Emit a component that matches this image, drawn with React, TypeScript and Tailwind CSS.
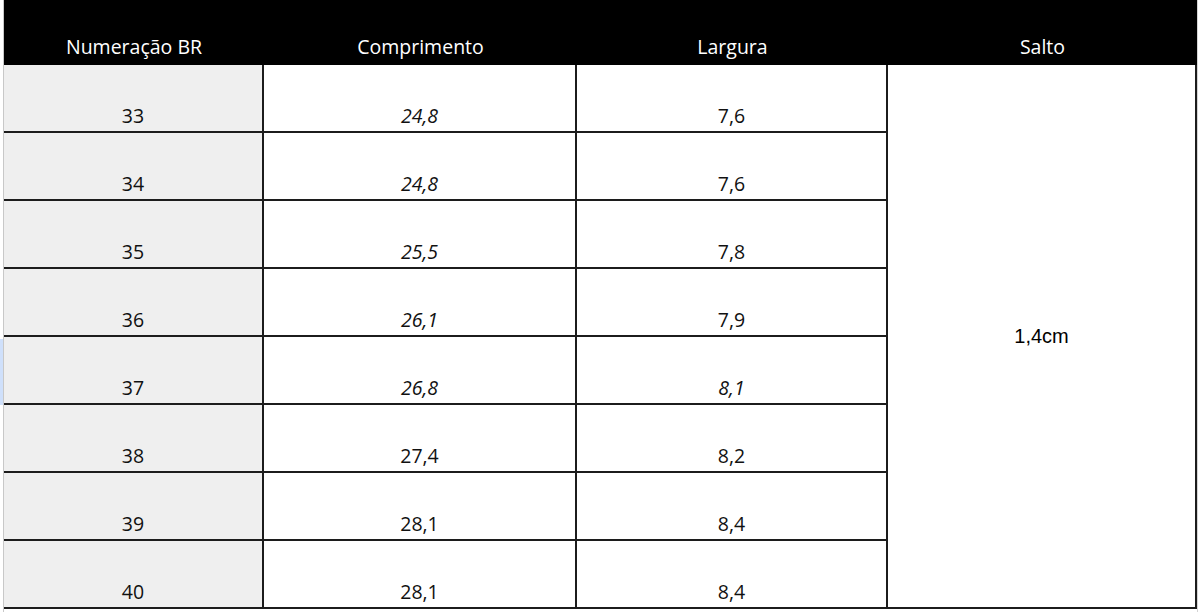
const ROWS: { br: string; comp: string; compItalic: boolean; larg: string; largItalic: boolean }[] = [
  { br: "33", comp: "24,8", compItalic: true, larg: "7,6", largItalic: false },
  { br: "34", comp: "24,8", compItalic: true, larg: "7,6", largItalic: false },
  { br: "35", comp: "25,5", compItalic: true, larg: "7,8", largItalic: false },
  { br: "36", comp: "26,1", compItalic: true, larg: "7,9", largItalic: false },
  { br: "37", comp: "26,8", compItalic: true, larg: "8,1", largItalic: true },
  { br: "38", comp: "27,4", compItalic: false, larg: "8,2", largItalic: false },
  { br: "39", comp: "28,1", compItalic: false, larg: "8,4", largItalic: false },
  { br: "40", comp: "28,1", compItalic: false, larg: "8,4", largItalic: false },
];

const HEADERS = ["Numeração BR", "Comprimento", "Largura", "Salto"];

const cell =
  "h-[68px] flex items-end justify-center pb-[2px] border-b-2 border-r-2 border-[#1c1c1c] text-[19.5px] leading-[26px] text-[#111]";

export default function App() {
  return (
    <div
      className="w-[1200px] h-[612px] bg-white overflow-hidden flex"
      style={{ fontFamily: '"Open Sans", "Noto Sans", sans-serif' }}
    >
      {/* left gutter: spreadsheet gridline + selection hint */}
      <div className="w-[4px] flex flex-col border-r border-[#c8c8c8]">
        <div className="h-[339px]" />
        <div className="h-[66px] bg-[#cfe0fb]" />
      </div>

      <div className="w-[1193px] flex flex-col">
        {/* Header */}
        <div className="h-[65px] bg-black grid grid-cols-[260px_313px_311px_309px]">
          {HEADERS.map((h) => (
            <div
              key={h}
              className="flex items-end justify-center pb-[5px] text-white text-[19.5px] leading-[26px]"
            >
              {h}
            </div>
          ))}
        </div>

        {/* Body */}
        <div className="grid grid-cols-[260px_313px_311px_309px]">
          <div className="col-start-1 col-span-3 grid grid-cols-[260px_313px_311px]">
            {ROWS.map((r) => (
              <div key={r.br} className="contents">
                <div className={`${cell} bg-[#efefef]`}>{r.br}</div>
                <div className={`${cell} ${r.compItalic ? "italic" : ""}`}>{r.comp}</div>
                <div className={`${cell} ${r.largItalic ? "italic" : ""}`}>{r.larg}</div>
              </div>
            ))}
          </div>
          <div
            className="flex items-center justify-center border-b-2 border-r-2 border-[#1c1c1c] text-[20px] text-black"
            style={{ fontFamily: '"Liberation Sans", Arial, sans-serif' }}
          >
            1,4cm
          </div>
        </div>
      </div>

      <div className="w-[3px] border-l border-[#d4d4d4]" />
    </div>
  );
}
